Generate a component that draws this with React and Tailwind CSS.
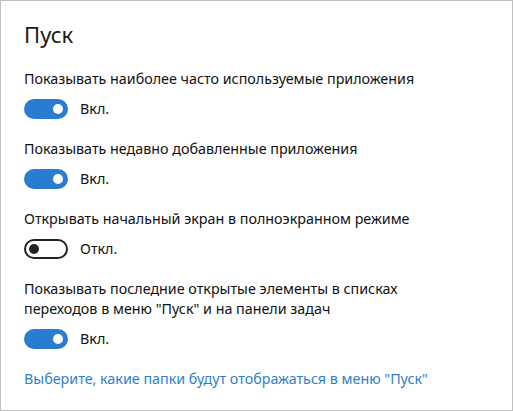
import React from "react";

function Toggle({ on }) {
  return on ? (
    <div className="w-[44px] h-[20px] rounded-full bg-[#2a7cd3] flex items-center justify-end pr-[5px]">
      <div className="w-[10px] h-[10px] rounded-full bg-white" />
    </div>
  ) : (
    <div className="w-[44px] h-[20px] rounded-full border-2 border-[#222] flex items-center pl-[3px]">
      <div className="w-[10px] h-[10px] rounded-full bg-[#222]" />
    </div>
  );
}

function Setting({ label, on }) {
  return (
    <div className="flex flex-col">
      <div className="text-[14.3px] leading-[20px] text-[#111]">{label}</div>
      <div className="mt-[10px] flex items-center gap-[12px]">
        <Toggle on={on} />
        <span className="text-[14.3px] leading-[20px] text-[#111]">{on ? "Вкл." : "Откл."}</span>
      </div>
    </div>
  );
}

export default function App() {
  return (
    <div
      className="w-[513px] h-[411px] bg-white border border-[#bfbfbf] pl-[23px] pr-[10px] pt-[16px]"
      style={{ fontFamily: '"Noto Sans", "Open Sans", sans-serif' }}
    >
      <div className="text-[22px] leading-[34px] text-[#1a1a1a]">Пуск</div>
      <div className="mt-[18px] flex flex-col gap-[20px]">
        <Setting label="Показывать наиболее часто используемые приложения" on />
        <Setting label="Показывать недавно добавленные приложения" on />
        <Setting label="Открывать начальный экран в полноэкранном режиме" on={false} />
        <Setting
          label={<>Показывать последние открытые элементы в списках<br />переходов в меню "Пуск" и на панели задач</>}
          on
        />
        <div className="text-[14.3px] leading-[20px] text-[#2f80cc]">
          Выберите, какие папки будут отображаться в меню "Пуск"
        </div>
      </div>
    </div>
  );
}
